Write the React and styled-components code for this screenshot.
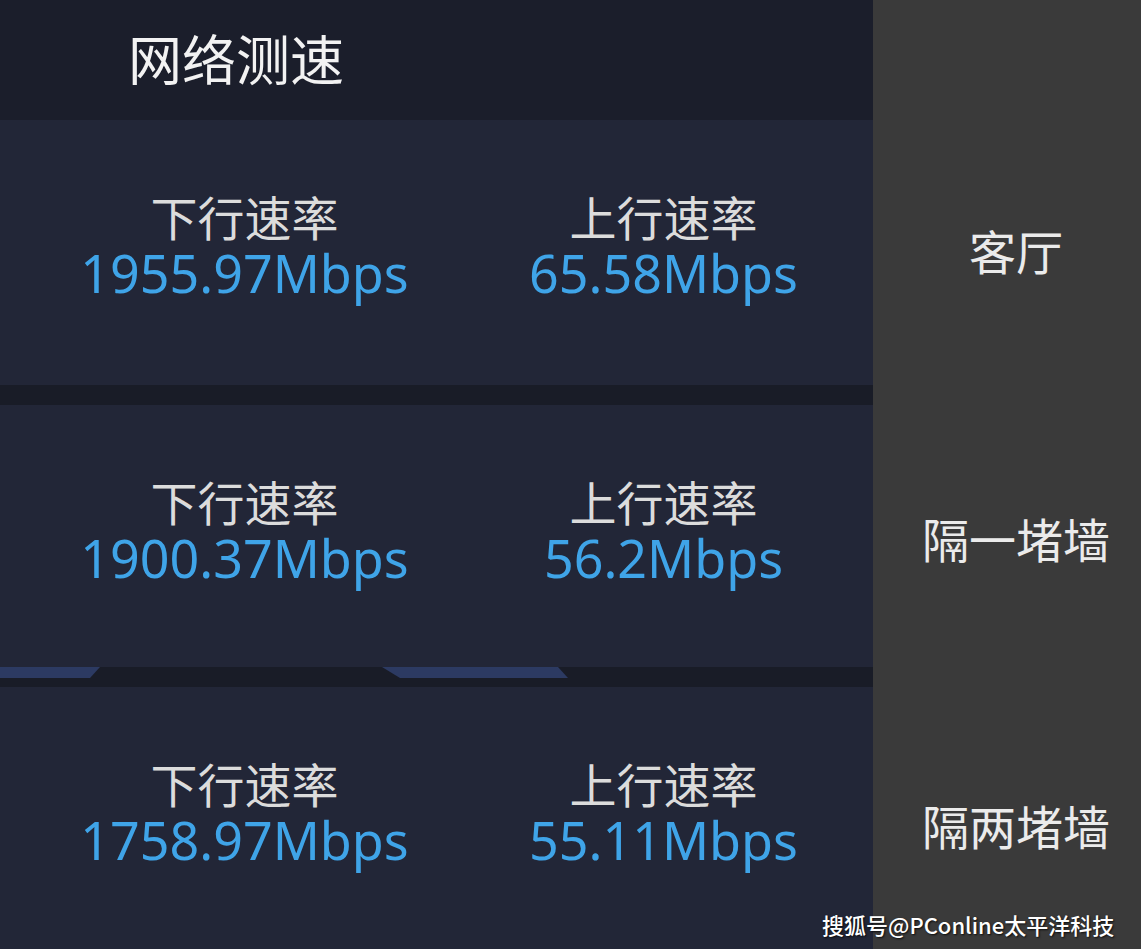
import React from 'react'
import styled, { createGlobalStyle } from 'styled-components'

const rows = [
    { place: '客厅', down: '1955.97Mbps', up: '65.58Mbps', height: 265, shift: -7 },
    { place: '隔一堵墙', down: '1900.37Mbps', up: '56.2Mbps', height: 262, shift: 2, tabs: true },
    { place: '隔两堵墙', down: '1758.97Mbps', up: '55.11Mbps', height: 262, shift: 12 },
]

const App = () => {
    return (
        <Page>
            <GlobalStyle />
            <Line height={120}>
                <Header>
                    <Title>网络测速</Title>
                </Header>
                <Side />
            </Line>
            {rows.map((row, i) => (
                <React.Fragment key={row.place}>
                    {i > 0 && (
                        <Line height={20}>
                            <Divider>
                                {rows[i - 1].tabs && (
                                    <>
                                        <Tab width={100} shape="polygon(0 0, 100% 0, 90px 100%, 0 100%)" />
                                        <Tab width={186} offset={282} shape="polygon(0 0, 176px 0, 100% 100%, 18px 100%)" />
                                    </>
                                )}
                            </Divider>
                            <Side />
                        </Line>
                    )}
                    <Line height={row.height}>
                        <Panel>
                            <Stat>
                                <Label>下行速率</Label>
                                <Value>{row.down}</Value>
                            </Stat>
                            <Stat>
                                <Label>上行速率</Label>
                                <Value>{row.up}</Value>
                            </Stat>
                        </Panel>
                        <Side shift={row.shift}>
                            <Place>{row.place}</Place>
                        </Side>
                    </Line>
                </React.Fragment>
            ))}
            <Watermark>搜狐号@PConline太平洋科技</Watermark>
        </Page>
    )
}

export default App


const GlobalStyle = createGlobalStyle`
    body {
        margin: 0;
        background: #3a3a3a;
        font-family: "Noto Sans CJK SC", "Noto Sans", sans-serif;
    }
`
const Page = styled.div`
    position: relative;
    width: 1141px;
    height: 949px;
    overflow: hidden;
`
const Line = styled.div`
    display: flex;
    height: ${p => p.height}px;
`
const Header = styled.div`
    width: 873px;
    background: #1b1e2b;
    padding: 31px 0 0 128px;
    box-sizing: border-box;
`
const Title = styled.div`
    font-size: 54px;
    line-height: 54px;
    color: #f2f2f2;
`
const Side = styled.div`
    flex: 1;
    background: #3a3a3a;
    display: flex;
    align-items: center;
    justify-content: center;
    padding-left: 18px;
    padding-top: ${p => Math.max(p.shift || 0, 0)}px;
    padding-bottom: ${p => Math.max(-(p.shift || 0), 0)}px;
`
const Place = styled.div`
    font-size: 47px;
    line-height: 47px;
    color: #ebebeb;
`
const Panel = styled.div`
    width: 873px;
    box-sizing: border-box;
    padding-left: 35px;
    background: #222637;
    display: grid;
    grid-template-columns: 419px 419px;
`
const Stat = styled.div`
    display: flex;
    flex-direction: column;
    align-items: center;
    padding-top: 72px;
`
const Label = styled.div`
    font-size: 47px;
    line-height: 47px;
    color: #dcdcdc;
`
const Value = styled.div`
    margin-top: 8px;
    font-family: "Noto Sans", sans-serif;
    font-size: 52px;
    line-height: 52px;
    color: #3fa4e8;
`
const Divider = styled.div`
    width: 873px;
    background: #191c27;
    display: flex;
    align-items: flex-start;
`
const Tab = styled.div`
    width: ${p => p.width}px;
    height: 11px;
    margin-left: ${p => p.offset || 0}px;
    background: #2c3a62;
    clip-path: ${p => p.shape};
`
const Watermark = styled.div`
    position: absolute;
    left: 822px;
    top: 912px;
    font-size: 22px;
    line-height: 24px;
    font-weight: 500;
    color: #ffffff;
    text-shadow: 1px 1px 2px rgba(0, 0, 0, 0.8);
    white-space: nowrap;
`
